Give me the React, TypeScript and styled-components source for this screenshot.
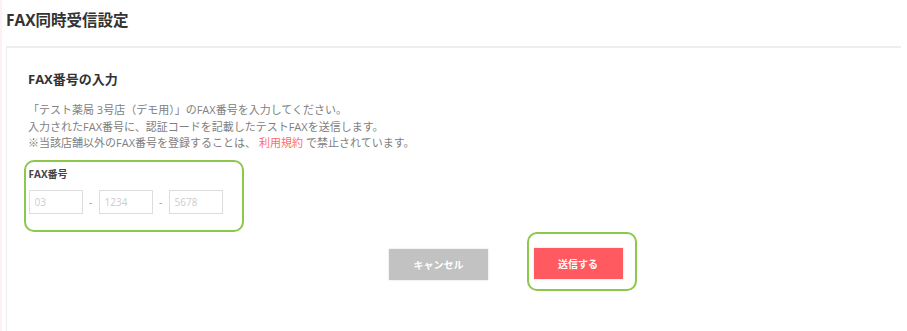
import React from "react";
import styled, { createGlobalStyle } from "styled-components";

const GlobalStyle = createGlobalStyle`
  html, body { margin: 0; padding: 0; background: #ffffff; }
  body { font-family: "Open Sans", "Noto Sans CJK JP", sans-serif; color: #333; }
`;

const Page = styled.div`
  min-height: 331px;
  border-left: 2px solid #fdf1f3;
  padding: 10px 0 0 4px;
  box-sizing: border-box;
  display: flex;
  flex-direction: column;
`;

const Title = styled.h1`
  margin: 0;
  font-size: 15.5px;
  line-height: 20px;
  font-weight: 700;
  color: #333;
`;

const Card = styled.section`
  margin-top: 16px;
  margin-right: 6px;
  border-top: 2px solid #eeeeee;
  border-left: 1px solid #eeeeee;
  padding: 22px 0 40px 21px;
  flex: 1;
`;

const Heading = styled.h2`
  margin: 0;
  font-size: 13px;
  line-height: 18px;
  font-weight: 700;
  color: #333;
`;

const Description = styled.p`
  margin: 14px 0 0;
  font-size: 11px;
  line-height: 16.5px;
  color: #808080;
`;

const Link = styled.span`
  color: #ff6b6b;
  margin: 0 3px;
`;

const FieldGroup = styled.div`
  margin: 8px 0 0 -4px;
  width: 220px;
  box-sizing: border-box;
  border: 2.5px solid #8cc84b;
  border-radius: 10px;
  padding: 5px 0 16px 2.5px;
`;

const Label = styled.div`
  font-size: 10px;
  line-height: 14px;
  font-weight: 700;
  color: #444;
`;

const InputRow = styled.div`
  margin-top: 9px;
  display: flex;
  align-items: center;
  gap: 6px;
`;

const Input = styled.input`
  width: 54px;
  height: 24px;
  box-sizing: border-box;
  border: 1px solid #dddddd;
  padding: 0 5px;
  font-family: "Open Sans", sans-serif;
  font-size: 10px;
  color: #333;
  outline: none;
  &::placeholder { color: #cccccc; }
`;

const Dash = styled.span`
  font-size: 10px;
  color: #999;
  width: 4px;
  text-align: center;
`;

const ButtonRow = styled.div`
  display: flex;
  align-items: flex-start;
  padding-left: 361px;
`;

const Button = styled.button<{ $variant: "cancel" | "submit" }>`
  height: 31px;
  border: none;
  font-family: "Open Sans", "Noto Sans CJK JP", sans-serif;
  font-size: 10px;
  font-weight: 700;
  color: #ffffff;
  cursor: pointer;
  width: ${(p) => (p.$variant === "cancel" ? "99px" : "89px")};
  background: ${(p) => (p.$variant === "cancel" ? "#c2c2c2" : "#ff5a5f")};
  box-shadow: 0 0 2px rgba(0, 0, 0, 0.15);
  margin-top: ${(p) => (p.$variant === "cancel" ? "17px" : "0")};
`;

const Highlight = styled.div`
  margin-left: 39px;
  border: 2.5px solid #8cc84b;
  border-radius: 10px;
  padding: 14.5px 12.5px 9.5px 4.5px;
`;

export default function App() {
  return (
    <>
      <GlobalStyle />
      <Page>
        <Title>FAX同時受信設定</Title>
        <Card>
          <Heading>FAX番号の入力</Heading>
          <Description>
            「テスト薬局 3号店（デモ用）」のFAX番号を入力してください。
            <br />
            入力されたFAX番号に、認証コードを記載したテストFAXを送信します。
            <br />
            ※当該店舗以外のFAX番号を登録することは、<Link>利用規約</Link>で禁止されています。
          </Description>
          <FieldGroup>
            <Label>FAX番号</Label>
            <InputRow>
              <Input placeholder="03" />
              <Dash>-</Dash>
              <Input placeholder="1234" />
              <Dash>-</Dash>
              <Input placeholder="5678" />
            </InputRow>
          </FieldGroup>
          <ButtonRow>
            <Button $variant="cancel">キャンセル</Button>
            <Highlight>
              <Button $variant="submit">送信する</Button>
            </Highlight>
          </ButtonRow>
        </Card>
      </Page>
    </>
  );
}
